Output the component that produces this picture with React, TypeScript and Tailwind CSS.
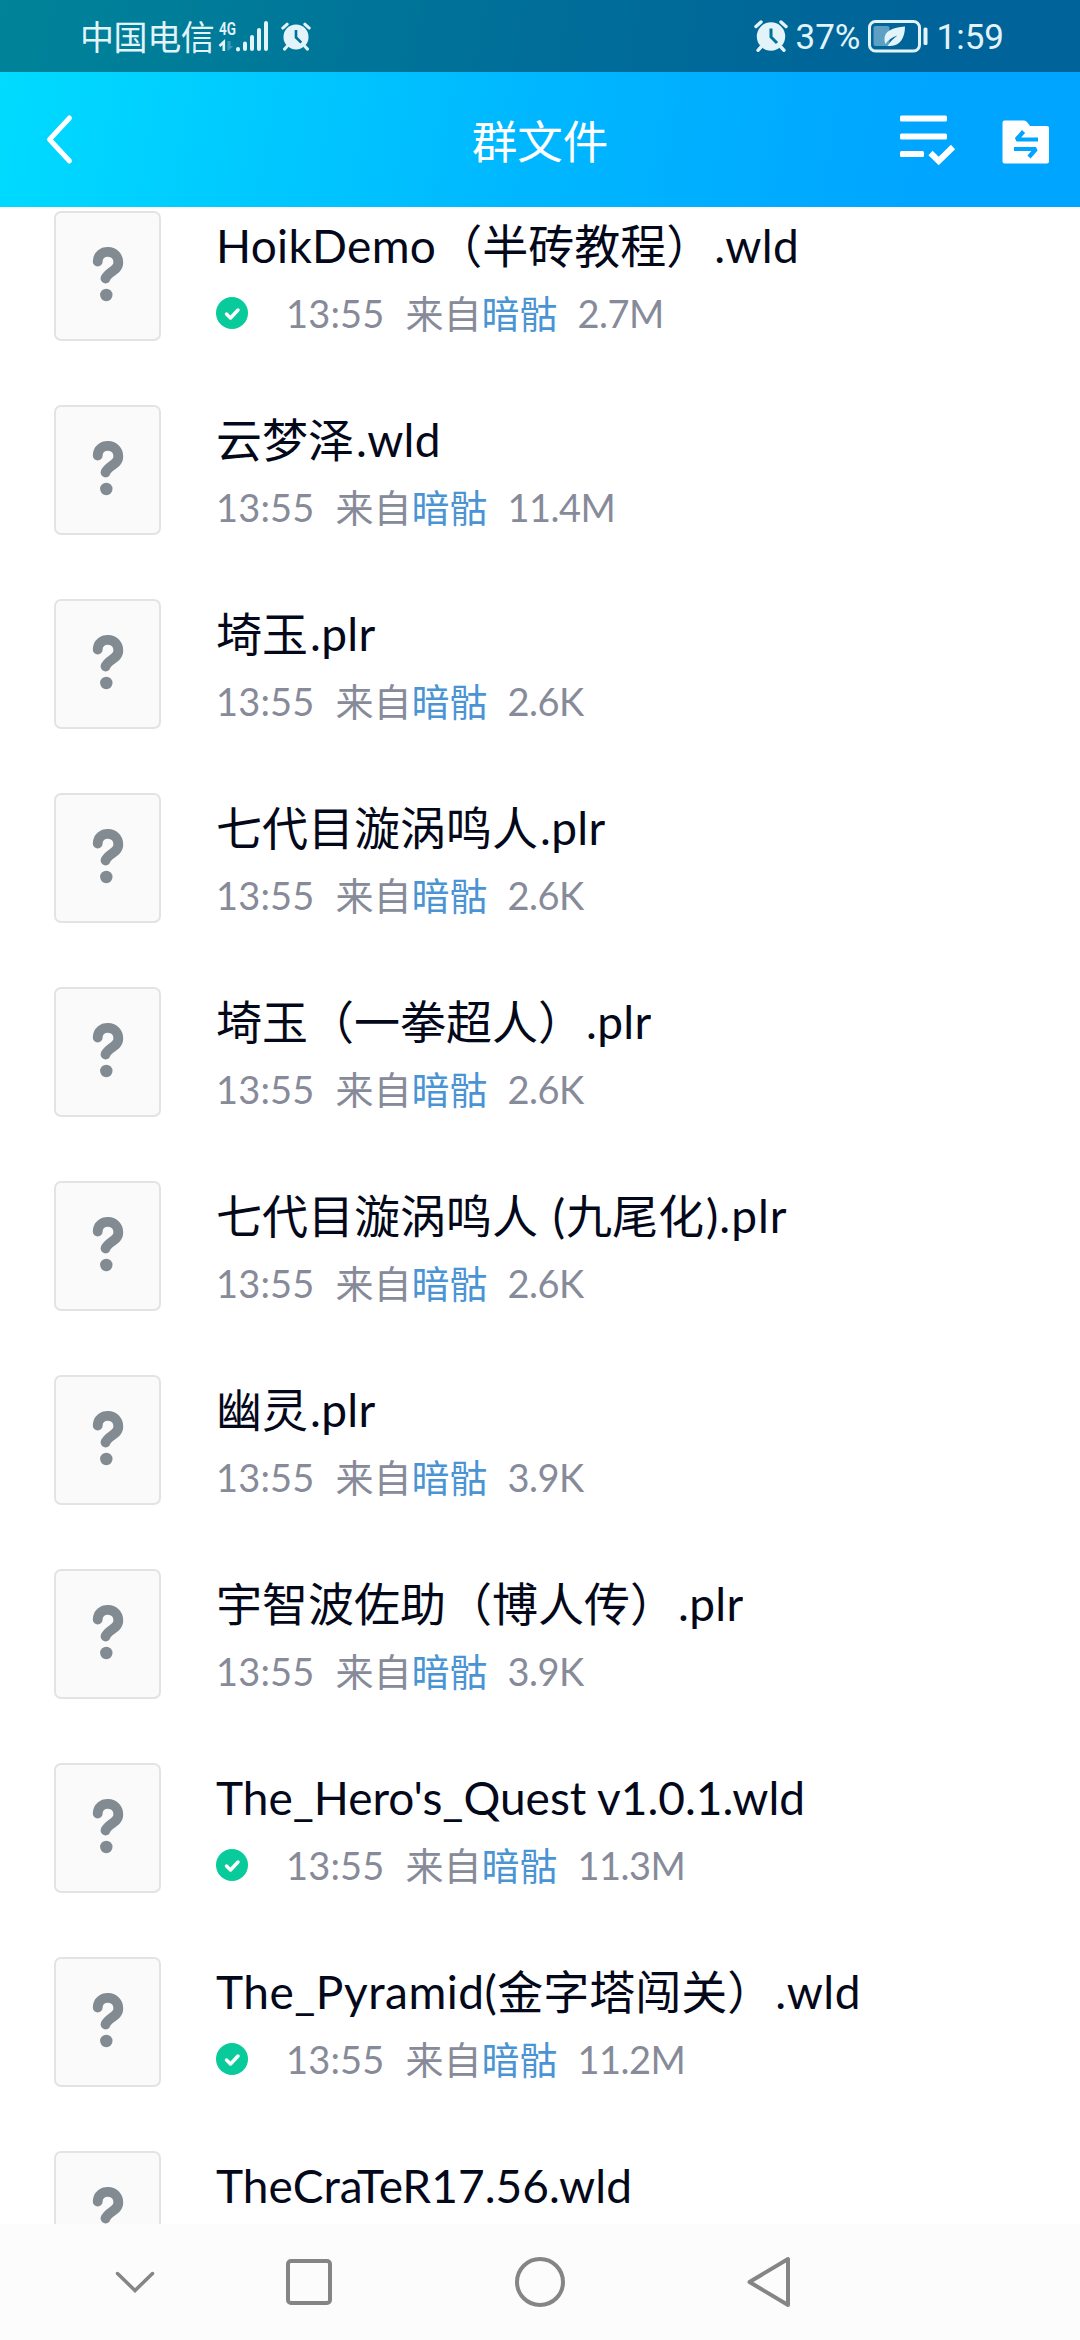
type GroupFile = {
  name: string;
  size?: string;
  saved?: boolean;
  tracking?: string;
};

const files: GroupFile[] = [
  { name: "HoikDemo（半砖教程）.wld", size: "2.7M", saved: true },
  { name: "云梦泽.wld", size: "11.4M" },
  { name: "埼玉.plr", size: "2.6K" },
  { name: "七代目漩涡鸣人.plr", size: "2.6K" },
  { name: "埼玉（一拳超人）.plr", size: "2.6K" },
  { name: "七代目漩涡鸣人 (九尾化).plr", size: "2.6K", tracking: "tracking-[1px]" },
  { name: "幽灵.plr", size: "3.9K" },
  { name: "宇智波佐助（博人传）.plr", size: "3.9K" },
  { name: "The_Hero's_Quest v1.0.1.wld", size: "11.3M", saved: true, tracking: "tracking-normal" },
  { name: "The_Pyramid(金字塔闯关）.wld", size: "11.2M", saved: true, tracking: "tracking-[0.5px]" },
  { name: "TheCraTeR17.56.wld", tracking: "tracking-[0.06px]" },
];

function AlarmIcon({ className }: { className: string }) {
  return (
    <svg viewBox="0 0 34 32" className={className} fill="none">
      <circle cx="17" cy="16.5" r="14.2" fill="#e2f3fa" />
      <path
        d="M2 6.5 7 2M32 6.5 27 2M7 27l-3 3.3M27 27l3 3.3"
        stroke="#e2f3fa"
        strokeWidth="3.4"
        strokeLinecap="round"
      />
      <path d="M17 8.5V17l6 6" stroke="#00719a" strokeWidth="3" />
    </svg>
  );
}

function StatusBar() {
  return (
    <div className="flex h-[72px] items-center justify-between bg-black/40 pl-[80px] pr-[76px] text-[#e2f3fa]">
      <div className="flex items-center">
        <span className="mt-[2px] text-[34px] leading-[50px] tracking-[-0.4px]">中国电信</span>
        <svg viewBox="0 0 52 34" className="ml-[4px] h-[34px] w-[52px] overflow-visible">
          <text
            x="1"
            y="15.5"
            fontFamily="Roboto"
            fontSize="19"
            fontWeight="600"
            textLength="17"
            lengthAdjust="spacingAndGlyphs"
            fill="#e2f3fa"
          >
            4G
          </text>
          <path d="M1.500 27 5.800 23v9" stroke="#e2f3fa" strokeWidth="2.6" fill="none" />
          <path d="M9.5 22v10l6-5h-3v-5z" fill="#3c9bb9" />
          <path
            d="M20 30v.5M27 24.5V30M34 18v12M41 11v19M48 4v26"
            stroke="#e2f3fa"
            strokeWidth="4"
            strokeLinecap="round"
          />
        </svg>
        <AlarmIcon className="ml-[11px] h-[29px] w-[30px]" />
      </div>
      <div className="flex items-center font-['Roboto'] text-[35px] leading-[40px]">
        <AlarmIcon className="h-[32px] w-[34px]" />
        <span className="ml-[8px] mt-[4px]">37%</span>
        <svg viewBox="0 0 60 34" className="ml-[7px] h-[34px] w-[60px]" fill="none">
          <rect x="1.5" y="2.500" width="50" height="29.500" rx="6" stroke="#e2f3fa" strokeWidth="3" />
          <rect x="5.500" y="7" width="16" height="20" rx="2" fill="#5e9fc4" />
          <rect x="55.5" y="8.5" width="4" height="17.5" rx="1.5" fill="#e2f3fa" />
          <path
            d="M16.500 20c0-8 8-11.500 20.500-12.500 0 11-5 19.500-14.500 19.500h-3c3-5 6-7.500 10-10.500-5.500 2-9.500 4.500-12 8.500-.7-1.500-1-3-1-5z"
            fill="#e2f3fa"
          />
        </svg>
        <span className="ml-[9px] mt-[4px]">1:59</span>
      </div>
    </div>
  );
}

function TitleBar() {
  return (
    <div className="grid h-[135px] grid-cols-3 items-center">
      <button className="ml-[43px] w-[32px]">
        <svg viewBox="0 0 32 52" className="h-[52px] w-[32px]" fill="none">
          <path
            d="M26.500 4 6.500 25.500l20 21.500"
            stroke="white"
            strokeWidth="5"
            strokeLinecap="round"
            strokeLinejoin="round"
          />
        </svg>
      </button>
      <h1 className="mt-[4px] text-center text-[45.5px] leading-[66px] text-white">群文件</h1>
      <div className="flex items-center justify-end pr-[30px]">
        <svg viewBox="0 0 58 52" className="h-[52px] w-[58px]" fill="none">
          <rect x="2" y="1.500" width="47" height="6" rx="1.500" fill="white" />
          <rect x="2" y="19.500" width="47" height="6" rx="1.500" fill="white" />
          <rect x="2" y="37" width="24" height="6" rx="1.500" fill="white" />
          <path d="m32.500 39 8.200 8L55 33" stroke="white" strokeWidth="6" />
        </svg>
        <svg viewBox="0 0 48 44" className="ml-[46px] mt-[4px] h-[44px] w-[48px]" fill="none">
          <path
            d="M2.500.5H22q2 0 3 1.500l3 4h17q2 0 2 2v33.500q0 2-2 2H2.500q-2 0-2-2v-39q0-2 2-2z"
            fill="white"
          />
          <path
            d="M36 19.500H14.500L21.500 11.500M12 29h22L27 37"
            stroke="#00a5ff"
            strokeWidth="4.200"
            strokeLinejoin="bevel"
          />
        </svg>
      </div>
    </div>
  );
}

function UnknownFileIcon() {
  return (
    <div className="h-[130px] w-[107px] shrink-0 rounded-[7px] border-2 border-[#e3e3e3] bg-[#fafafa]">
      <svg viewBox="2 2 103 126" className="h-full w-full" fill="none">
        <path
          d="M43.700 50.500C43.700 37.500 64.300 37.500 64.300 51.500C64.300 60 54 60.500 51.500 67.500"
          stroke="#818b91"
          strokeWidth="9.800"
          strokeLinecap="round"
        />
        <circle cx="52.300" cy="84" r="6.200" fill="#818b91" />
      </svg>
    </div>
  );
}

// latin runs are spaced a little wider than the chinese text around them
function FileName({ name, tracking = "tracking-[0.3px]" }: { name: string; tracking?: string }) {
  return (
    <p className="h-[78px] overflow-hidden whitespace-pre pt-[7px] text-[46px] leading-[56px] text-[#03081a]">
      {name.split(/([\x20-\x7e]+)/).map((run, i) =>
        i % 2 === 1 ? (
          <span key={i} className={`${tracking} ${name.startsWith(run) ? "" : "ml-[2px]"}`}>
            {run}
          </span>
        ) : (
          run
        )
      )}
    </p>
  );
}

function FileRow({ file }: { file: GroupFile }) {
  return (
    <li className="flex h-[194px] shrink-0 pl-[54px]">
      <UnknownFileIcon />
      <div className="ml-[55px]">
        <FileName name={file.name} tracking={file.tracking} />
        {file.size && (
          <div className="flex h-[48px] items-center whitespace-nowrap text-[38px] leading-[48px] text-[#878b99]">
            {file.saved && (
              <svg viewBox="0 0 32 32" className="mr-[38px] h-[32px] w-[32px]" fill="none">
                <circle cx="16" cy="16" r="16" fill="#09ca9b" />
                <path
                  d="m10.500 17 4 4 7.500-8"
                  stroke="white"
                  strokeWidth="3.500"
                  strokeLinecap="round"
                  strokeLinejoin="round"
                />
              </svg>
            )}
            <span className="tracking-[0.15px]">13:55</span>
            <span className="ml-[21px]">
              来自<span className="text-[#4a94d4]">暗骷</span>
            </span>
            <span className="ml-[20px] tracking-[-0.5px]">{file.size}</span>
          </div>
        )}
      </div>
    </li>
  );
}

function NavBar() {
  return (
    <div className="flex h-[116px] items-center bg-[#fcfcfc]">
      <svg viewBox="0 0 42 26" className="ml-[114px] h-[26px] w-[42px]" fill="none">
        <path d="m3.500 4.500 17.500 17 17.500-17" stroke="#858585" strokeWidth="3.500" strokeLinecap="round" />
      </svg>
      <div className="ml-[130px] h-[46px] w-[46px] rounded-[5px] border-4 border-[#858585]"></div>
      <div className="ml-[183px] h-[50px] w-[50px] rounded-full border-4 border-[#858585]"></div>
      <svg viewBox="0 0 46 52" className="ml-[181px] h-[52px] w-[46px]" fill="none">
        <path
          d="M3.500 26 42 3v46z"
          stroke="#858585"
          strokeWidth="4"
          strokeLinejoin="round"
        />
      </svg>
    </div>
  );
}

function App() {
  return (
    <div className="flex h-[2340px] w-[1080px] flex-col overflow-hidden bg-white font-['Lato','Noto_Sans_CJK_SC',sans-serif]">
      <header className="bg-linear-[100deg] from-[#00dcff] via-[#00b8ff] via-48% to-[#00a5ff] to-85%">
        <StatusBar />
        <TitleBar />
      </header>
      <ul className="flex min-h-0 flex-1 flex-col overflow-hidden pt-[4px]">
        {files.map((file) => (
          <FileRow key={file.name} file={file} />
        ))}
      </ul>
      <NavBar />
    </div>
  );
}

export default App;
